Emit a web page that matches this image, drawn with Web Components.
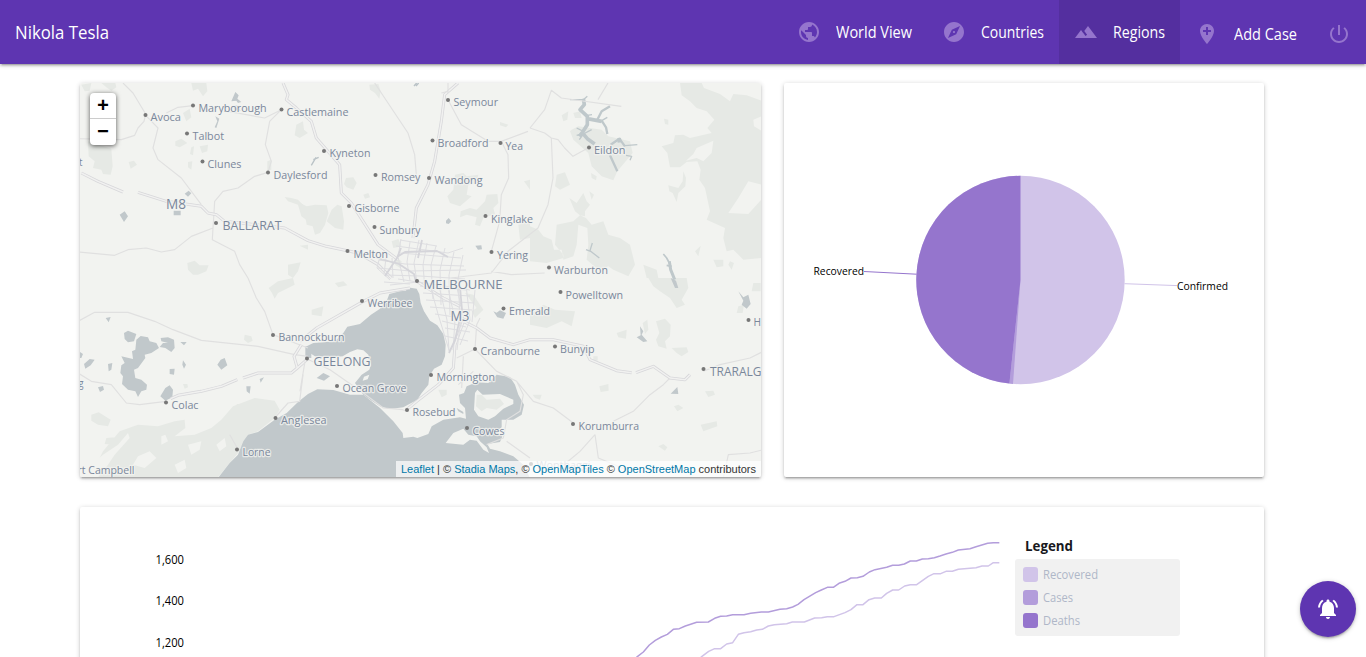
<!DOCTYPE html>
<html lang="en">
<head>
<meta charset="utf-8">
<title>Regions</title>
<style>
html,body{margin:0;height:100%;overflow:hidden;background:#fff;font-family:"Open Sans","Noto Sans",sans-serif}
</style>
</head>
<body>
<case-dashboard></case-dashboard>
<script>
const define=(name,html,init)=>{
  const t=document.createElement('template');t.innerHTML=html;
  customElements.define(name,class extends HTMLElement{
    connectedCallback(){
      if(this.shadowRoot)return;
      this.attachShadow({mode:'open'}).append(t.content.cloneNode(true));
      if(init)init(this,this.shadowRoot);
    }
  });
};

/* Text condensed or stretched to a given width */
define('fit-label',`<style>
:host{display:block;white-space:nowrap;overflow:visible}
span{display:inline-block;transform-origin:0 50%}
</style><span><slot></slot></span>`,(el,r)=>{
  const w=+el.getAttribute('width'),s=r.querySelector('span');
  el.style.width=w+'px';
  const n=s.getBoundingClientRect().width;
  if(n)s.style.transform='scaleX('+(w/n)+')';
});

const ICONS={
 globe:'M12 2C6.48 2 2 6.48 2 12s4.48 10 10 10 10-4.48 10-10S17.52 2 12 2zm-1 17.93c-3.95-.49-7-3.85-7-7.93 0-.62.08-1.21.21-1.79L9 15v1c0 1.1.9 2 2 2v1.93zm6.900-2.540c-.26-.81-1-1.390-1.900-1.390h-1v-3c0-.55-.45-1-1-1H8v-2h2c.55 0 1-.45 1-1V7h2c1.100 0 2-.900 2-2v-.410c2.930 1.190 5 4.060 5 7.410 0 2.080-.800 3.970-2.100 5.390z',
 compass:'M12 10.900c-.61 0-1.100.49-1.100 1.100s.49 1.100 1.100 1.100c.61 0 1.100-.49 1.100-1.100s-.49-1.100-1.100-1.100zM12 2C6.480 2 2 6.480 2 12s4.480 10 10 10 10-4.480 10-10S17.520 2 12 2zm2.190 12.190L6 18l3.810-8.190L18 6l-3.810 8.190z',
 terrain:'M14 6l-3.750 5 2.850 3.800-1.600 1.200C9.810 13.750 7 10 7 10l-6 8h22L14 6z',
 pin:'M12 2C8.140 2 5 5.140 5 9c0 5.250 7 13 7 13s7-7.750 7-13c0-3.860-3.140-7-7-7zm4 8h-3v3h-2v-3H8V8h3V5h2v3h3v2z',
 power:'M13 3h-2v10h2V3zm4.830 2.170l-1.420 1.420C17.990 7.860 19 9.810 19 12c0 3.870-3.130 7-7 7s-7-3.130-7-7c0-2.190 1.010-4.140 2.580-5.420L6.170 5.170C4.230 6.820 3 9.260 3 12c0 4.970 4.030 9 9 9s9-4.030 9-9c0-2.740-1.230-5.180-3.170-6.830z',
 bell:'M7.580 4.080L6.150 2.650C3.750 4.480 2.170 7.300 2.030 10.500h2c.15-2.650 1.510-4.970 3.550-6.420zm12.390 6.420h2c-.15-3.200-1.730-6.020-4.120-7.850l-1.420 1.430c2.020 1.450 3.390 3.770 3.540 6.420zM18 11c0-3.070-1.640-5.640-4.500-6.320V4c0-.83-.67-1.500-1.500-1.500s-1.500.67-1.500 1.500v.68C7.630 5.360 6 7.920 6 11v5l-2 2v1h16v-1l-2-2v-5zm-6 11c.14 0 .27-.01.4-.04.65-.14 1.180-.58 1.440-1.180.1-.24.15-.5.15-.78h-4c.01 1.100.9 2 2.010 2z'
};
define('md-icon',`<style>:host{display:block;width:24px;height:24px;color:#9575cd}svg{display:block}</style>
<svg width="24" height="24" viewBox="0 0 24 24" fill="currentColor"><path/></svg>`,
(el,r)=>r.querySelector('path').setAttribute('d',ICONS[el.getAttribute('name')]));

define('nav-item',`<style>
:host{display:flex;align-items:center;gap:15px;height:64px;padding:0 15px;box-sizing:border-box;font-size:15.5px;line-height:22px;color:#fff}
:host([active]){background:rgba(0,0,0,.1)}
:host([low]){padding-top:4px}
</style><slot name="icon"></slot><slot></slot>`);

define('top-bar',`<style>
:host{display:flex;align-items:center;height:64px;background:#5e35b1;color:#fff;box-shadow:0 2px 2px 0 rgba(0,0,0,.14),0 3px 1px -2px rgba(0,0,0,.12),0 1px 5px 0 rgba(0,0,0,.2);position:relative}
.brand{margin-left:15px;font-size:18px;line-height:26px}
nav{display:flex;margin-left:auto}
</style>
<div class="brand"><fit-label width="94">Nikola Tesla</fit-label></div>
<nav>
<nav-item><md-icon slot="icon" name="globe"></md-icon><fit-label width="76">World View</fit-label></nav-item>
<nav-item><md-icon slot="icon" name="compass"></md-icon><fit-label width="63">Countries</fit-label></nav-item>
<nav-item active><md-icon slot="icon" name="terrain"></md-icon><fit-label width="52">Regions</fit-label></nav-item>
<nav-item low><md-icon slot="icon" name="pin"></md-icon><fit-label width="63">Add Case</fit-label></nav-item>
<nav-item low><md-icon slot="icon" name="power"></md-icon></nav-item>
</nav>`);

define('paper-card',`<style>
:host{display:block;position:relative;background:#fff;border-radius:2px;box-shadow:0 2px 2px 0 rgba(0,0,0,.14),0 3px 1px -2px rgba(0,0,0,.12),0 1px 5px 0 rgba(0,0,0,.2)}
</style><slot></slot>`);

/* name, x, baseline, width, dot x, dot y, size */
const PLACES=[
['Maryborough',199,112,68,193,105.500],['Avoca',151,121,30.500,145.500,115],['Castlemaine',287,116,62,281.500,109.500],
['Talbot',193,139.500,31.500,187,133.500],['Clunes',208,168,34,202.500,161.500],['Daylesford',274,178.500,54,268,172.500],
['Seymour',454,106,44.500,448,100],['Kyneton',330,157,41,324,151],['Broadford',438,147,51,432.500,140.500],
['Yea',506,149.500,17.500,500.500,143],['Romsey',381.500,181,39.500,375.500,175],['Wandong',435,184,48,429,178],
['Gisborne',355,212,45,349,206],['Sunbury',380,233.500,41,374.500,227],['Kinglake',491.500,222.500,42,485.500,216],
['Melton',354,257.500,34.500,347.500,251],['Yering',497.500,258.500,31,491.500,252],['Eildon',594.500,154,31.500,589,147.500],
['Warburton',554.500,273.500,54,549,267.500],['Powelltown',566,298.500,57.500,560.500,292],['Werribee',368,307,45,362,301],
['Emerald',509.500,314.500,41,503.500,308.500],['Bannockburn',279,341,66,273,335],['Cranbourne',481,355,59.500,475,349],
['Bunyip',560.500,353,34.500,555,346.500],['Mornington',437,381,58.500,431,375],['Ocean Grove',343,392,64,337,386],
['Rosebud',413,416,43,407,410],['Cowes',473,434.500,32,467,428],['Colac',172,409,27,166,402.500],
['Anglesea',281.500,424,45.500,275.500,418],['Lorne',243,455.500,28,237,449.500],['Korumburra',579,430,60.500,573,424],
['BALLARAT',223,230,59,216,223,12.500],['MELBOURNE',424,288.500,79,417,281,12.500],['GEELONG',314,365.500,57,307,358.500,12.500],
['TRARALG',710.500,376,51.500,703.500,369,12.500],['M8',166.500,209,20,0,0,14],['M3',451,320.500,19,0,0,14],
['H',754,326,7.500,748.500,320],['t',79.500,166,3.500,0,0],['g',79,387,5,0,0],['rt Campbell',78,474,57,0,0],['Wonthaggi',537,469,54,531,464]
];

define('region-map',`<style>
:host{display:block;position:relative;width:681px;height:394px;overflow:hidden;border-radius:2px}
svg.map{display:block}
.zoom{position:absolute;left:10px;top:10px;width:26px;border-radius:4px;background:#fff;box-shadow:0 1px 5px rgba(0,0,0,.65);font:bold 20px/27px "Liberation Mono",monospace;text-align:center;color:#000}
.zoom b{display:block;height:25px}
.zoom b+b{border-top:1px solid #ccc;height:26px;line-height:27px}
.attr{position:absolute;right:0;bottom:0;height:16px;padding:0 5px;background:rgba(255,255,255,.7);font:11px/16px "Liberation Sans",Arial,sans-serif;color:#333;white-space:nowrap}
.attr a{color:#0078a8}
text{font-family:"Open Sans","Noto Sans",sans-serif;font-size:11.300px;fill:#7a879b;stroke:#f2f3f0;stroke-width:2.600px;stroke-opacity:.8;paint-order:stroke;stroke-linejoin:round}
.w{fill:#c1c8cb}.f{fill:#e6e9e5}.land{fill:#f2f3f0}
.r{fill:none;stroke:#e0e0e0;stroke-width:3.500;stroke-linejoin:round}
.mw{fill:none;stroke:#d7d7da;stroke-width:9;stroke-linejoin:round}
.mi{fill:none;stroke:#f1f1f0;stroke-width:4.400;stroke-linejoin:round}
</style>
<svg class="map" width="681" height="394" viewBox="80 83 681 394">
<rect x="80" y="83" width="681" height="394" fill="#f2f3f0"/>
<g transform="translate(78 78) scale(.33333)" class="f">
 <path d="M30 190L100 212 104 265 98 290 75 288 70 275 45 270 50 250 32 235zM70 15H112L115 28 100 38 85 28zM340 15H385L388 40 375 55 360 32 345 38zM315 105L335 92 340 118 325 130zM292 190L310 182 328 195 305 208 292 203zM340 208L348 205 345 232 336 228zM365 205L390 200 388 220 372 225zM330 252L343 250 340 275 330 268zM152 252L168 248 177 260 158 272zM655 140L675 130 678 155 690 165 665 180 650 172zM568 250L580 245 580 275 568 278zM630 560L668 553 660 580 645 600 630 590zM328 555L350 548 365 562 392 562 385 580 360 590 345 590 330 575zM665 503L690 500V515zM620 357L640 360 660 365 690 395 690 430 670 415 660 380 630 370zM10 20L40 15 35 38 20 40z"/>
</g>
<g transform="translate(300 78) scale(.33333)" class="f">
 <path d="M0 375L20 385 45 380 80 382 85 405 75 440 60 465 45 470 38 445 20 440 15 410zM95 395L112 380 125 385 132 430 130 455 105 450 80 430zM138 300L160 298 170 315 160 335 140 328 132 318zM190 350L205 345 210 358 195 362zM465 290L490 285 500 295 535 290 530 315 505 320 500 350 515 355 480 385 450 375 442 355 460 335zM560 350L592 348 595 375 580 390 585 408 550 420 540 445 525 440 530 418 500 410 480 418 482 400 510 390 530 395 555 370zM208 20L235 18 242 40 238 62 225 45 210 35zM275 490L295 483 305 505 280 510zM290 540L305 550 300 570 285 560zM600 132L625 140 618 148 600 142zM655 440L690 430V480L660 485zM672 310L690 305V335z"/>
</g>
<g transform="translate(530 78) scale(.33333)" class="f">
 <path fill-rule="evenodd" d="M450 15H515L522 30 570 48 600 70 610 48 650 52 694 68V115L670 125 672 145 694 158V320L655 310 625 360 595 405 655 408 694 365V540L640 545 610 515 590 520 580 480 585 450 530 425 540 400 525 330 508 305 512 275 502 250 470 252 450 268 420 268 412 225 395 205 430 195 435 172 460 170 480 180 545 165 532 150 553 125 530 100 500 90 480 70 455 52zM550 188L500 210 490 228 468 248 500 240 520 250 545 225zM125 155L145 145 215 155 235 175 300 190 308 225 262 280 250 307 215 295 185 265 175 225 130 185 120 160zM80 440L130 430 150 412 168 420 185 440 220 430 235 470 270 480 300 500 315 560 295 595 250 575 235 565 205 575 170 545 175 500 172 450 145 440 140 500 130 535 100 545 100 530 75 500zM0 445L25 455 40 475 65 485 72 515 95 515 100 540 50 555 0 550zM80 290L105 283 120 320 90 335 75 325zM118 360L140 375 160 345 170 370 180 380 165 400 165 415 150 412 135 400zM95 112L115 100 112 125 100 130zM130 105L150 100 155 120 135 120zM402 122L415 125 415 140 405 138zM183 285L200 295 198 307 185 300zM178 340L192 350 185 365zM415 322L445 330 458 310 460 280 468 300 466 325 445 345 440 372 428 345 418 340zM550 545L580 545 580 565 560 568zM600 550L612 555 605 575 595 560zM495 520L512 503 505 535zM340 560L380 575 385 600H350z"/>
</g>
<g transform="translate(78 278) scale(.33333)" class="f">
 <path d="M0 598L55 560 75 520 125 460 180 440 240 445 290 430 320 425 322 450 290 475 350 470 400 450 430 425 465 385 530 360 590 368 605 395 590 420 540 460 510 470 480 525 455 555 420 598zM40 410L62 403 98 425 90 445 60 440 40 428zM85 480L112 478 108 500 80 498zM500 170L520 175 524 188 510 195 498 185zM572 30L600 10 645 0 650 20 600 45 590 62 582 45zM315 318L328 318 330 328 320 332zM475 378L490 378 488 390z"/>
 <path class="land" d="M0 560L40 560 75 530 120 500 150 465 155 480 110 530 90 560 60 598H0zM180 535L215 520 235 540 200 570 165 560zM330 500L370 490 365 515 340 530zM415 500L440 480 445 505 425 520zM250 475L262 470 270 490 250 500zM290 560L320 545 325 570 300 585z"/>
</g>
<g transform="translate(530 278) scale(.33333)" class="f">
 <path d="M355 0H470L475 30 455 65 465 80 440 90 420 60 390 40 370 25zM0 110L40 80 75 95 135 100 125 145 95 130 50 150 0 140zM378 130L405 122 422 140 420 175 405 190 410 212 385 205 378 185 388 165zM338 135L352 125 355 155 345 168zM260 165L290 155 288 182 265 178zM425 210L470 208 475 222 455 235 440 225zM208 325L235 318 236 338 212 342zM525 340L550 338 555 350 535 357zM432 385L445 380 460 390 442 400zM512 440L560 430 562 445 520 460zM385 505L400 498 412 508 405 518zM8 350L35 350 30 365 15 360zM625 85L642 80 638 105 620 105zM190 235H203V248H190zM670 15H692V40H665z"/>
</g>
<g transform="translate(300 278) scale(.33333)">
 <path class="f" d="M35 95L70 85 65 115 35 110zM105 15L130 10 142 22 115 28zM495 45L520 50 540 80 550 95 525 120 515 100 530 90zM415 335L440 335 440 350 425 358z"/>
 <path class="w" d="M20 205L40 195 105 190 130 165 142 146 180 138 213 110 240 92 262 64 268 48 300 40 318 38 322 28 350 32 358 48 362 75 372 100 390 128 412 142 430 168 437 200 435 235 425 260 402 272 388 295 385 320 365 345 352 365 310 388 270 393 240 385 215 368 190 350 165 315 185 290 208 275 213 260 205 230 190 217 172 214 150 222 128 235 90 238 45 235 25 222z"/>
 <path class="w" d="M-246 600L-211 555-186 530-170 490-156 470-126 462-76 425-40 405-6 372 24 348 52 334 100 336 150 350 190 350 240 390 280 430 308 465 310 480 340 476 352 480 385 468 395 445 430 425 480 418 498 422 495 390 480 375 477 350 492 345 500 325 530 313 565 315 590 290 630 297 645 320 655 350 672 380 665 410 640 425 605 425 605 448 590 460 607 475 600 492 562 498 570 512 600 520 640 535 670 560 690 600z"/>
 <path class="land" d="M437 495L460 465 490 452 505 470 530 475 540 490 560 508 567 525 550 515 530 488 510 485 490 500zM525 345L532 335 548 350 600 348 640 365 640 378 610 392 585 415 565 425 535 415 522 395zM188 308L192 296 208 290 203 304z"/>
 <path class="f" d="M530 350L545 350 560 365 600 362 612 378 590 395 560 390 545 400 528 385z"/>
 <path class="w" d="M50 300L70 285 90 295 72 308zM580 100L590 104 600 97 618 105 610 122 592 118zM470 390L490 402 490 408 475 400z"/>
</g>
<g transform="translate(78 278) scale(.33333)" class="w">
 <path d="M138 165L150 158 175 168 168 190 150 193 140 183zM175 185L188 174 210 178 215 190 235 195 243 210 220 225 200 230 202 240 180 270 168 275 172 300 190 305 207 320 205 335 190 340 180 357 172 340 150 335 132 318 135 295 127 285 130 262 140 255 130 235 165 243 162 220 172 215zM248 180L270 178 288 185 290 210 280 222 262 210 245 207 255 195 270 195 250 190zM307 192L326 192 318 202zM262 330L275 322 285 335 283 358 262 368 247 355zM428 245L440 240 448 262 430 275 418 260zM275 273L290 272 288 290 275 288zM315 247L324 260 318 272 313 260zM90 258L103 255 100 275 92 280zM83 120L98 117 92 133zM6 222L15 228 10 240 4 240zM18 258L35 243 50 245 38 262 22 272zM60 328L75 324 78 335 66 342zM505 325L518 325 515 347 506 340zM545 303L558 298 548 314zM682 205H700V240H682z"/>
</g>
<g transform="translate(78 78) scale(.33333)" class="w">
 <path d="M460 70L472 42 482 52 478 62 490 72 480 75 475 68zM412 115L424 122 415 150 410 148 418 130zM320 347L332 338 340 346 330 356zM287 398H308V412H287zM125 410L140 400 150 415 138 432zM465 85L478 82 488 98 470 97z"/>
 <path fill="none" stroke="#b9c2c6" stroke-width="4" d="M700 262L714 238M706 245L722 238M1016 15L1008 24M1022 15L1014 24"/>
 <path d="M1104 428L1112 420 1120 430 1112 438 1104 436zM1192 503L1210 502 1212 514 1200 515z"/>
</g>
<g transform="translate(530 78) scale(.33333)" fill="none" stroke="#bfc8cb" stroke-linejoin="round">
 <path stroke-width="11" d="M160 62L163 80 150 95 172 115 172 140 158 162 148 175M155 162L172 182 194 198M172 122L215 130"/>
 <path stroke-width="7" d="M215 128L228 148 232 168M202 125L215 100 240 85M242 200L268 182 285 205M240 232L262 280"/>
 <path stroke-width="13" d="M262 188L274 186"/>
 <path stroke-width="4" d="M120 65L160 65 172 55M215 128L232 118M140 150L160 160M140 172L155 168M288 232L305 235 300 247M285 203L322 200M187 495L180 518 208 540M168 515L182 520M148 185L160 168 185 155M172 112L186 110"/>
 <path stroke-width="5" d="M400 528L410 540 418 555M410 562L425 565"/>
 <path stroke-width="9" d="M418 550L422 575 434 605"/>
</g>
<g transform="translate(530 278) scale(.33333)" class="w"><path d="M422 0L438 8 445 30 435 30zM625 40L640 58 655 50 662 78 650 92 635 80 640 68zM330 145L340 160 335 170 352 190 340 192 320 178 332 172zM422 347L442 327 445 348z"/></g>

<g transform="translate(78 78) scale(.33333)">
 <g class="r">
 <path d="M135 15L165 45 203 108 198 130 180 150 170 172 130 185 0 182M203 112L240 150 225 210 240 245 310 300 370 380M345 83L300 88 265 105M0 522L110 532 150 515 205 510 250 522 290 515 340 475 405 450 408 405 410 370 435 340 480 330 530 295 570 283 580 250 562 200 575 130 610 95 560 120 450 100M405 450L403 485 470 520 485 560 510 600M890 15L920 60 990 165 1010 230 1015 290M1110 65L1150 140 1230 190 1270 190M1270 190L1290 230 1292 300 1270 350 1265 430 1240 520M1270 190L1350 160M1356 150L1400 95 1420 37 1450 60 1630 85M1560 65L1590 15M1356 150L1400 165 1420 180 1440 185 1460 210 1485 235 1530 210M1420 180L1425 300 1410 380 1380 450 1290 520 1240 585 1120 600M1240 580L1300 590 1400 585"/>
 </g>
 <path class="mw" d="M10 285L60 310 135 342M180 343L265 370 370 385 390 405 415 410 440 430 620 450 690 488 745 505 840 525 900 560 940 600M615 15L630 50 625 65 655 90 700 130 715 180 785 260 790 345 820 375 900 500 960 545M1140 15L1100 50 1090 130 1070 250 1050 320 1015 390 1005 480"/>
 <path class="mi" d="M10 285L60 310 135 342M180 343L265 370 370 385 390 405 415 410 440 430 620 450 690 488 745 505 840 525 900 560 940 600M615 15L630 50 625 65 655 90 700 130 715 180 785 260 790 345 820 375 900 500 960 545M1140 15L1100 50 1090 130 1070 250 1050 320 1015 390 1005 480"/>
 <path class="r" d="M1110 15V45M1090 45L1110 40"/>
</g>
<g transform="translate(78 278) scale(.33333)">
 <path class="r" d="M0 130L50 103 150 103 230 130 285 155 370 187 540 205 650 230 690 235M0 285L40 310 100 320 145 375 185 380 264 370M510 0L535 60 560 100 585 170 690 210M675 290L665 370 630 375 590 420M455 470L478 510"/>
 <path class="mw" d="M278 362L300 352 370 340 430 325 478 305M495 300L540 285 640 285 658 270 648 235 670 200M658 270L690 242"/>
 <path class="mi" d="M278 362L300 352 370 340 430 325 478 305M495 300L540 285 640 285 658 270 648 235 670 200M658 270L690 242"/>
</g>
<g transform="translate(300 278) scale(.33333)">
 <path class="r" d="M20 242L90 275 190 345 250 390 308 395 320 400M15 250L0 340M525 213L530 140 540 120M525 213L590 280 650 310 670 350 660 400 620 425 610 480 560 500M525 213L470 240M490 235L485 330M650 310L700 370 760 390 820 435M475 320L520 280M620 490L690 540M885 470L840 520 780 570M885 470L895 540 980 575M940 430L1000 400 1050 350 1090 320 1110 300M1210 280L1260 260 1350 240 1390 220M1270 600L1285 530 1350 525 1390 515"/>
 <path class="mw" d="M0 190L50 150 190 70 240 45 330 30 M350 10L430 60 480 85 490 130 465 200 460 270 415 320 350 370 320 395M490 130L530 150 570 180 640 200 690 185 760 185 850 205 870 245 950 278 995 284M1008 284L1060 265 1110 300 1155 305 1170 290"/>
 <path class="mi" d="M0 190L50 150 190 70 240 45 330 30 M350 10L430 60 480 85 490 130 465 200 460 270 415 320 350 370 320 395M490 130L530 150 570 180 640 200 690 185 760 185 850 205 870 245 950 278 995 284M1008 284L1060 265 1110 300 1155 305 1170 290"/>
</g>
<g class="r" style="stroke:#dedee1;stroke-width:1">
 <path d="M400 240L437 246M396 246L448 253 463 248M400 253L461 258M379 260L405 264 464 266M378 268L410 271 466 270M385 275L420 276 465 279M398 279L470 290M401 239L398 257 404 282M410 242L407 262 410 281M419 240L414 263 417 282M427 243L423 265 425 290M436 246L431 265 433 299M445 248L440 270 441 305M454 252L449 275 450 315M463 255L458 279 460 316M379 260L377 268 390 280M386 258L384 274M392 258L393 278M420 286L466 290M423 293L470 296M426 300L474 303M430 307L472 310M435 314L468 319M442 321L466 327M445 328L470 332M445 336L468 341M430 285L438 314 449 350M439 286L447 320 449 351M448 288L455 320 453 350M457 288L462 310 457 350M466 285L470 320 460 345M475 290L472 322M384 282L410 284M390 285L418 282"/>
</g>
<g class="mw" style="stroke:#d5d5da;stroke-width:1.800">
 <path d="M397 257L405 252 437 251 448 257M377 258L399 264 414 274 416 282M401 248L397 258 385 276M422 240L418 258M460 287L462 310 455 340 449 353"/>
</g>
<g id="labels"></g>
</svg>
<div class="zoom"><b>+</b><b>−</b></div>
<div class="attr"><fit-label width="355"><a>Leaflet</a> | © <a>Stadia Maps</a>, © <a>OpenMapTiles</a> © <a>OpenStreetMap</a> contributors</fit-label></div>`,
(el,r)=>{
  const g=r.getElementById('labels'),ns='http://www.w3.org/2000/svg';
  for(const [n,x,y,w,dx,dy,fs] of PLACES){
    const t=document.createElementNS(ns,'text');
    t.textContent=n;t.setAttribute('x',x-.5);t.setAttribute('y',y);
    t.setAttribute('textLength',w);t.setAttribute('lengthAdjust','spacingAndGlyphs');
    if(fs)t.style.fontSize=fs+'px';
    if(n==='Wonthaggi')t.style.opacity=.6;
    g.append(t);
    if(dx){const c=document.createElementNS(ns,'circle');
      c.setAttribute('cx',dx);c.setAttribute('cy',dy);c.setAttribute('r',2);c.setAttribute('fill','#777');g.append(c);}
  }
});

define('pie-chart',`<style>:host{display:block}svg{display:block}text{font-family:"Open Sans","Noto Sans",sans-serif;font-size:10.800px;fill:#000}</style>
<svg width="480" height="394" viewBox="784 83 480 394">
<circle cx="1020.500" cy="280" r="104.200" fill="#d1c4e9"/>
<path fill="#b39ddb" d="M1020.500 280L1013 383.930A104.200 104.200 0 0 0 1013 383.930L1009.400 383.610Z"/>
<path fill="#9575cd" d="M1020.500 280L1009.400 383.610A104.200 104.200 0 0 1 1020.500 175.800Z"/>
<path d="M1020.500 176V280" stroke="#b39ddb" stroke-width=".8"/>
<path d="M864 271.500L916.500 274.200" stroke="#9575cd"/><path d="M1124.500 283.700L1177 285.600" stroke="#d1c4e9"/>
<text x="813.500" y="275" textLength="50.500" lengthAdjust="spacingAndGlyphs">Recovered</text>
<text x="1177" y="290" textLength="51" lengthAdjust="spacingAndGlyphs">Confirmed</text>
</svg>`);

define('line-chart',`<style>:host{display:block}svg{display:block}text{font-family:"Open Sans","Noto Sans",sans-serif;font-size:12px;fill:#000}</style>
<svg width="925" height="150" viewBox="80 507 925 150">
<text x="155.500" y="564" textLength="28.500" lengthAdjust="spacingAndGlyphs">1,600</text>
<text x="155.500" y="605" textLength="28.500" lengthAdjust="spacingAndGlyphs">1,400</text>
<text x="155.500" y="647" textLength="28.500" lengthAdjust="spacingAndGlyphs">1,200</text>
<g transform="translate(600 500) scale(.33333)" fill="none" stroke-width="4.500" stroke-linejoin="round">
<path stroke="#b39ddb" d="M95 486L112 470 130 456 148 435 166 421 184 411 202 403 220 388 238 386 256 378 272 373 290 367 325 366 344 355 362 349 380 348 398 344 432 344 452 340 484 336 505 336 540 328 560 326 578 321 594 313 612 299 647 278 664 270 682 262 700 262 717 250 735 244 753 234 772 233 789 229 808 216 825 209 860 202 878 196 896 196 913 192 931 183 949 183 967 177 985 176 1003 173 1020 168 1038 162 1057 157 1075 150 1110 146 1128 140 1163 130 1180 128 1198 128"/>
<path stroke="#d1c4e9" d="M288 486L306 469 326 454 344 446 362 446 380 432 398 428 415 403 432 398 452 395 470 390 487 388 505 378 523 374 560 371 577 366 613 366 644 354 665 353 682 350 702 350 735 338 753 329 771 314 789 314 807 299 824 294 844 294 860 280 878 270 896 270 914 258 931 254 950 254 967 242 985 229 1002 221 1022 221 1038 214 1057 214 1075 208 1128 203 1146 198 1165 198 1180 188 1198 188"/>
</g></svg>`);

define('legend-row',`<style>:host{display:flex;align-items:center;gap:5px;height:15px;font-size:12px;line-height:15px;color:#afb7c8}
i{width:15px;height:15px;border-radius:3px;background:var(--swatch)}</style><i></i><slot></slot>`);

define('chart-legend',`<style>:host{display:block;width:165px;padding-top:30px}
.title{margin-left:10px;font-size:13.5px;font-weight:700;line-height:18px;color:#181820}
.box{display:flex;flex-direction:column;gap:8px;background:#f1f1f1;border-radius:3px;margin-top:4px;height:77px;padding:8px;box-sizing:border-box}</style>
<div class="title"><fit-label width="48">Legend</fit-label></div>
<div class="box">
<legend-row style="--swatch:#d1c4e9"><fit-label width="55">Recovered</fit-label></legend-row>
<legend-row style="--swatch:#b39ddb"><fit-label width="30">Cases</fit-label></legend-row>
<legend-row style="--swatch:#9575cd"><fit-label width="37">Deaths</fit-label></legend-row>
</div>`);

define('alert-button',`<style>:host{position:fixed;right:10px;bottom:20px;width:56px;height:56px;border-radius:50%;background:#5e35b1;display:grid;place-items:center;box-shadow:0 2px 2px 0 rgba(0,0,0,.14),0 3px 1px -2px rgba(0,0,0,.12),0 1px 5px 0 rgba(0,0,0,.2)}
md-icon{color:#fff}</style><md-icon name="bell"></md-icon>`);

define('case-dashboard',`<style>
:host{display:block;height:100vh;overflow:hidden}
main{display:grid;grid-template-columns:681px 480px;column-gap:23px;row-gap:30px;padding:19px 102px 0 80px}
.wide{grid-column:1/3;height:500px}
.trend{display:flex;gap:10px}
</style>
<top-bar></top-bar>
<main>
<paper-card><region-map></region-map></paper-card>
<paper-card><pie-chart></pie-chart></paper-card>
<paper-card class="wide"><div class="trend"><line-chart></line-chart><chart-legend></chart-legend></div></paper-card>
</main>
<alert-button></alert-button>`);
</script>
</body>
</html>
